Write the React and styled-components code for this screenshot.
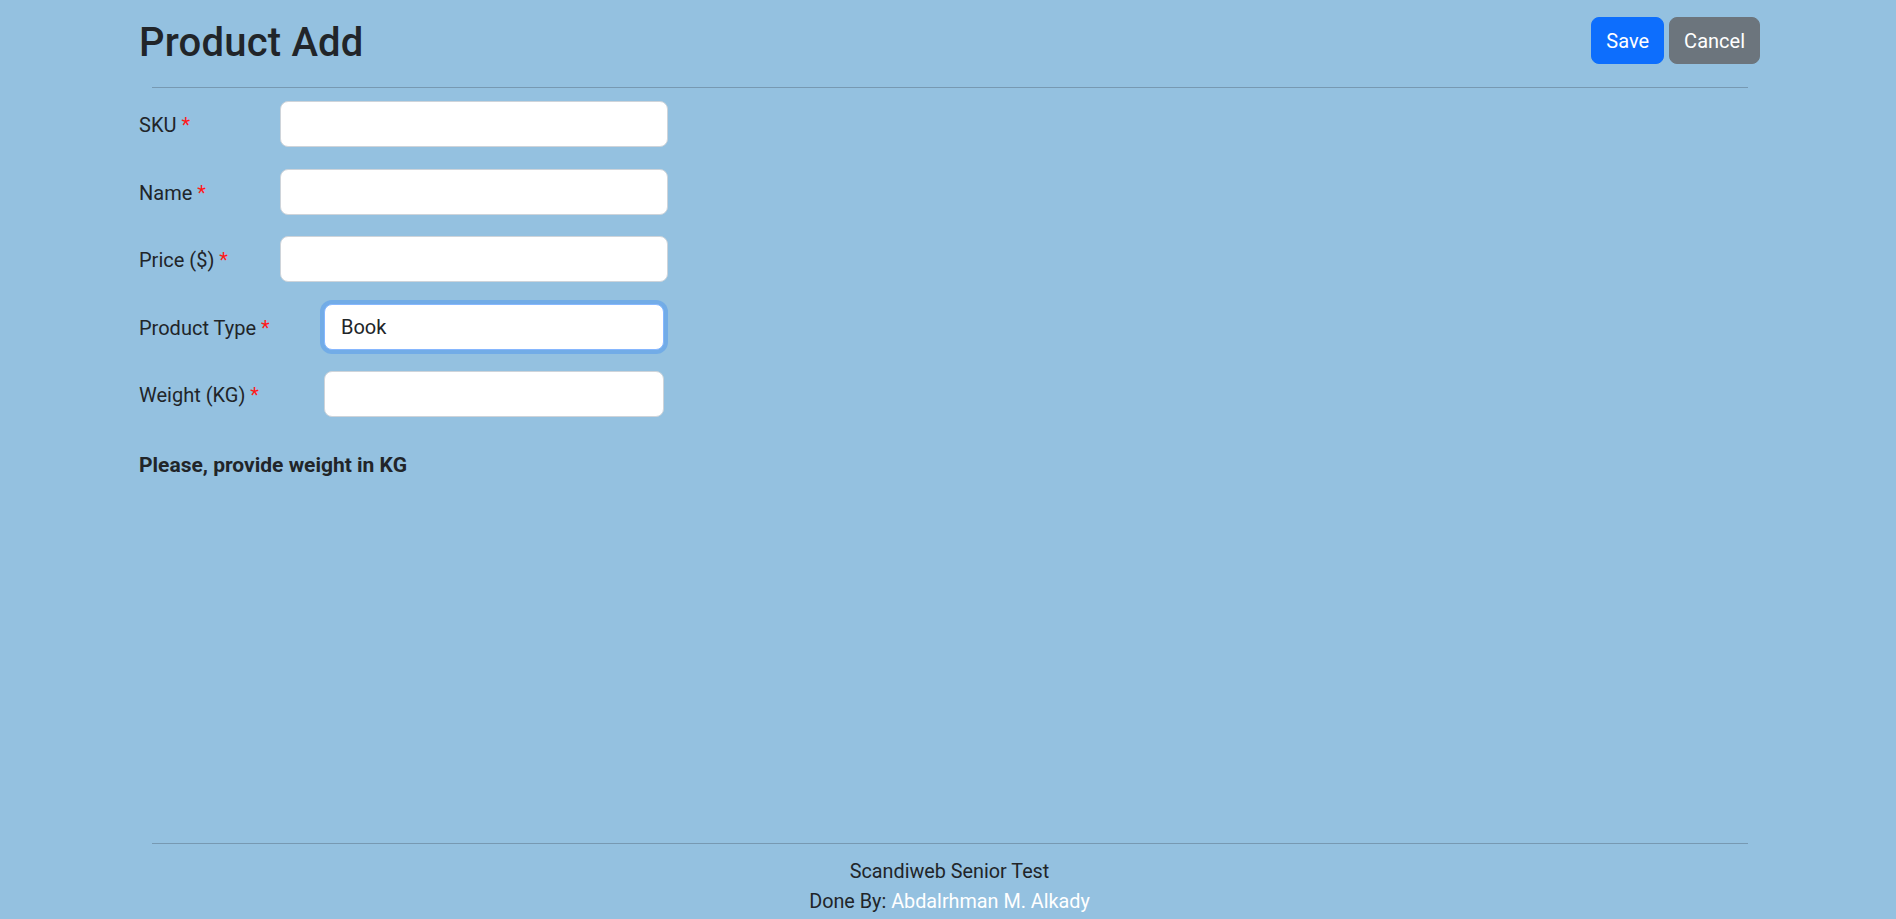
import React from "react";
import styled, { createGlobalStyle } from "styled-components";

const GlobalStyle = createGlobalStyle`
  * { box-sizing: border-box; }
  html, body { margin: 0; padding: 0; }
  body {
    background: #94c1e0;
    color: #212529;
    font-family: Roboto, "Liberation Sans", Arial, sans-serif;
    font-size: 20px;
    line-height: 1.5;
  }
`;

const Page = styled.div`
  min-height: 100vh;
  padding: 0 136px 0 139px;
  display: flex;
  flex-direction: column;
`;

const Header = styled.header`
  display: flex;
  justify-content: space-between;
  align-items: flex-start;
  padding-top: 17px;
`;

const Title = styled.h1`
  margin: 0;
  padding-top: 2px;
  font-size: 40px;
  line-height: 48px;
  font-weight: 500;
  letter-spacing: 0.2px;
`;

const Actions = styled.div`
  display: flex;
  gap: 5px;
`;

const Button = styled.button`
  height: 47px;
  padding: 0 14px;
  border: 1px solid ${(p) => (p.$variant === "primary" ? "#0d6efd" : "#6c757d")};
  background: ${(p) => (p.$variant === "primary" ? "#0d6efd" : "#6c757d")};
  color: #fff;
  font-family: inherit;
  font-size: 20px;
  line-height: 30px;
  border-radius: 8px;
  cursor: pointer;
`;

const Rule = styled.hr`
  margin: ${(p) => p.$top}px 12px 0 13px;
  border: 0;
  border-top: 1px solid rgba(33, 37, 41, 0.25);
  height: 0;
`;

const Form = styled.form`
  display: flex;
  flex-direction: column;
  gap: 21.5px;
  padding-top: 13px;
`;

const FieldRow = styled.div`
  display: grid;
  grid-template-columns: ${(p) => p.$labelWidth}px ${(p) => p.$inputWidth}px;
  align-items: center;
`;

const Label = styled.label`
  font-size: 20px;
  line-height: 30px;
  padding-top: 2px;
`;

const Required = styled.span`
  color: #ff1a1a;
`;

const fieldBase = `
  height: 46px;
  width: 100%;
  padding: 0 16px;
  font-family: inherit;
  font-size: 20px;
  color: #212529;
  background: #fff;
  border: 1px solid #ced4da;
  border-radius: 8px;
  outline: none;
`;

const TextInput = styled.input`
  ${fieldBase}
`;

const Select = styled.select`
  ${fieldBase}
  appearance: none;
  -webkit-appearance: none;
  border-color: ${(p) => (p.$focused ? "#86b7fe" : "#ced4da")};
  box-shadow: ${(p) => (p.$focused ? "0 0 0 4px rgba(13, 110, 253, 0.25)" : "none")};
`;

const Hint = styled.p`
  margin: 33px 0 0;
  font-weight: 700;
  font-size: 21px;
  line-height: 30px;
`;

const Footer = styled.footer`
  margin-top: auto;
  text-align: center;
  padding-bottom: 2px;
`;

const FooterText = styled.div`
  font-size: 19.8px;
  line-height: 30px;
  &:first-of-type { margin-top: 13px; }
`;

const Author = styled.a`
  color: #fff;
  text-decoration: none;
`;

const fields = [
  { id: "sku", label: "SKU", lw: 141, iw: 388 },
  { id: "name", label: "Name", lw: 141, iw: 388 },
  { id: "price", label: "Price ($)", lw: 141, iw: 388 },
];

export default function App() {
  return (
    <>
      <GlobalStyle />
      <Page>
        <Header>
          <Title>Product Add</Title>
          <Actions>
            <Button $variant="primary">Save</Button>
            <Button $variant="secondary">Cancel</Button>
          </Actions>
        </Header>
        <Rule $top={20} />
        <Form onSubmit={(e) => e.preventDefault()}>
          {fields.map((f) => (
            <FieldRow key={f.id} $labelWidth={f.lw} $inputWidth={f.iw}>
              <Label htmlFor={f.id}>
                {f.label} <Required>*</Required>
              </Label>
              <TextInput id={f.id} type="text" />
            </FieldRow>
          ))}
          <FieldRow $labelWidth={185} $inputWidth={340}>
            <Label htmlFor="productType">
              Product Type <Required>*</Required>
            </Label>
            <Select id="productType" $focused defaultValue="Book">
              <option value="DVD">DVD</option>
              <option value="Book">Book</option>
              <option value="Furniture">Furniture</option>
            </Select>
          </FieldRow>
          <FieldRow $labelWidth={185} $inputWidth={340}>
            <Label htmlFor="weight">
              Weight (KG) <Required>*</Required>
            </Label>
            <TextInput id="weight" type="text" />
          </FieldRow>
        </Form>
        <Hint>Please, provide weight in KG</Hint>
        <Footer>
          <Rule $top={0} />
          <FooterText>Scandiweb Senior Test</FooterText>
          <FooterText>
            Done By: <Author href="#">Abdalrhman M. Alkady</Author>
          </FooterText>
        </Footer>
      </Page>
    </>
  );
}
